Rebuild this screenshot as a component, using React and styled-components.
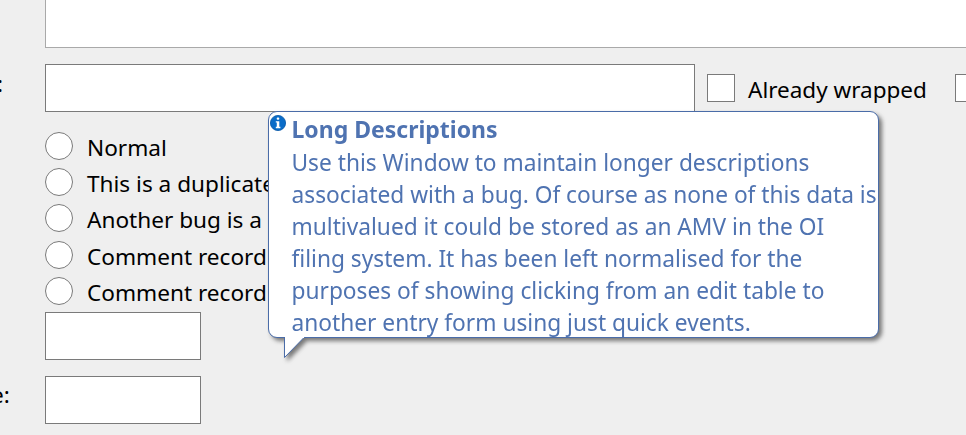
import React from "react";
import styled, { createGlobalStyle } from "styled-components";

const Global = createGlobalStyle`
  html, body { margin: 0; padding: 0; background: #efefef; }
  body { width: 966px; height: 435px; overflow: hidden; font-family: "Noto Sans", "Open Sans", sans-serif; }
`;

const Page = styled.div`
  position: relative;
  width: 966px;
  height: 435px;
  overflow: hidden;
  display: flex;
  flex-direction: column;
  background: #efefef;
  color: #000;
  font-size: 22.6px;
`;

const Row = styled.div`
  display: flex;
  align-items: center;
  height: 48px;
  margin-top: ${(p) => p.$mt || 0}px;
  white-space: nowrap;
`;

const Label = styled.div`
  width: 45px;
  flex: none;
  overflow: hidden;
  padding-bottom: 10px;
  text-indent: ${(p) => p.$indent || 0}px;
`;

const Field = styled.div`
  box-sizing: border-box;
  flex: none;
  width: ${(p) => p.$w}px;
  height: 48px;
  background: #fff;
  border: 1px solid #7a7a7a;
`;

const TopField = styled(Field)`
  border-color: #a9a9a9;
  border-top: none;
  border-right: none;
`;

const Check = styled.span`
  box-sizing: border-box;
  flex: none;
  width: 28px;
  height: 28px;
  background: #fff;
  border: 1px solid #7a7a7a;
  margin-left: ${(p) => p.$ml}px;
`;

const CheckText = styled.span`
  margin-left: 13px;
  padding-top: 3px;
  font-size: 22.5px;
`;

const RadioList = styled.div`
  display: flex;
  flex-direction: column;
  margin: 16px 0 3px 45px;
`;

const RadioRow = styled.div`
  display: flex;
  align-items: center;
  height: 36.2px;
  gap: 14px;
  white-space: nowrap;
`;

const Radio = styled.span`
  box-sizing: border-box;
  flex: none;
  width: 28px;
  height: 28px;
  border-radius: 50%;
  background: #fff;
  border: 1px solid #7a7a7a;
`;

const RadioText = styled.span`
  padding-top: 3px;
  font-size: 22.6px;
`;

const Tip = styled.div`
  position: absolute;
  left: 268px;
  top: 111px;
  width: 611px;
  height: 227px;
  filter: drop-shadow(3px 3px 2px rgba(70, 70, 70, 0.7));
`;

const TipBody = styled.div`
  box-sizing: border-box;
  width: 100%;
  height: 100%;
  background: #fff;
  border: 1px solid #4a6ca8;
  border-radius: 9px;
  padding: 1px 0 0 22.5px;
  color: #4f73b1;
  font-size: 22.72px;
  white-space: nowrap;
`;

const TipTitle = styled.div`
  font-size: 23px;
  font-weight: 700;
  line-height: 32px;
  margin-bottom: 2px;
`;

const TipLine = styled.div`
  line-height: 32px;
`;

const Tail = styled.svg`
  position: absolute;
  left: 15px;
  top: 225px;
  display: block;
`;

const InfoIcon = styled.svg`
  position: absolute;
  left: 2px;
  top: 4px;
  display: block;
`;

const lines = [
  "Use this Window to maintain longer descriptions",
  "associated with a bug. Of course as none of this data is",
  "multivalued it could be stored as an AMV in the OI",
  "filing system. It has been left normalised for the",
  "purposes of showing clicking from an edit table to",
  "another entry form using just quick events.",
];

const radios = ["Normal", "This is a duplicate", "Another bug is a", "Comment record", "Comment record"];

export default function App() {
  return (
    <Page>
      <Global />
      <Row>
        <Label />
        <TopField $w={921} />
      </Row>
      <Row $mt={16}>
        <Label $indent={-3}>:</Label>
        <Field $w={650} />
        <Check $ml={12} />
        <CheckText>Already wrapped</CheckText>
        <Check $ml={28} />
      </Row>
      <RadioList>
        {radios.map((r, i) => (
          <RadioRow key={i}>
            <Radio />
            <RadioText>{r}</RadioText>
          </RadioRow>
        ))}
      </RadioList>
      <Row>
        <Label />
        <Field $w={156} />
      </Row>
      <Row $mt={16}>
        <Label $indent={-9}>e:</Label>
        <Field $w={156} />
      </Row>
      <Tip>
        <TipBody>
          <TipTitle>Long Descriptions</TipTitle>
          {lines.map((l) => (
            <TipLine key={l}>{l}</TipLine>
          ))}
        </TipBody>
        <Tail width="24" height="24" viewBox="0 0 24 24">
          <path d="M1.5 1 V21.5 L21.5 1" fill="#fff" stroke="#4a6ca8" strokeWidth="1" />
          <rect x="2" y="0" width="19" height="2" fill="#fff" />
        </Tail>
        <InfoIcon width="16" height="16" viewBox="0 0 16 16">
          <circle cx="8" cy="8" r="7.6" fill="#0a6cc8" stroke="#0556a6" strokeWidth="0.8" />
          <rect x="6.7" y="2.4" width="2.6" height="2.4" rx="1" fill="#fff" />
          <path d="M5.8 6.2 H9.3 V11.8 H10.4 V13.2 H5.8 V11.8 H6.8 V7.6 H5.8 Z" fill="#fff" />
        </InfoIcon>
      </Tip>
    </Page>
  );
}
